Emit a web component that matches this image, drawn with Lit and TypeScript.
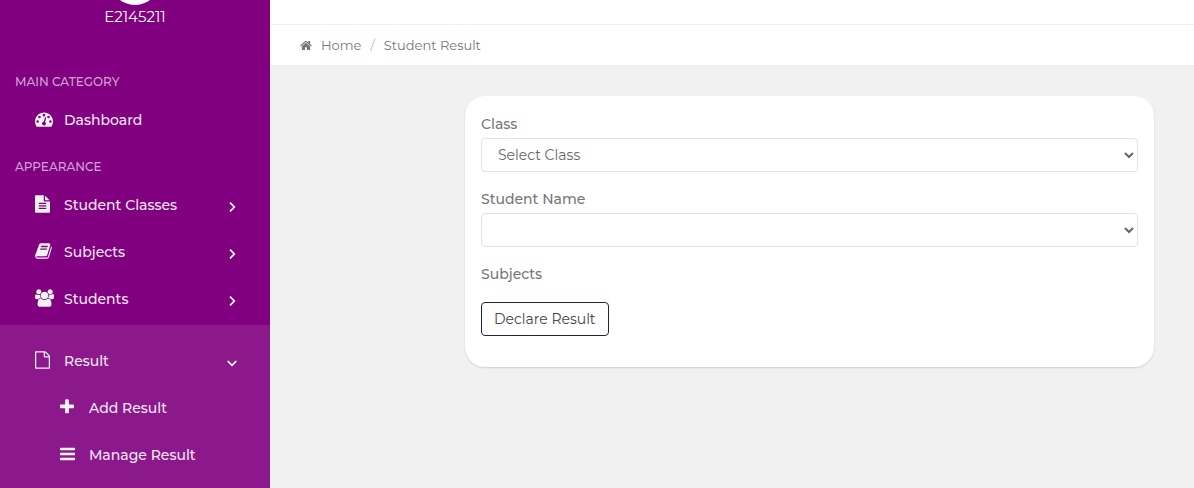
import { LitElement, html, css, svg } from "lit";
import { customElement } from "lit/decorators.js";
import { classMap } from "lit/directives/class-map.js";

interface Glyph {
  box: string;
  width: number;
  d: string;
}

const dot = (x: number, y: number) =>
  `M${x - 128} ${y}a128 128 0 1 0 256 0a128 128 0 1 0-256 0z`;
const line = (y: number) =>
  `M1280 ${y}v-64q0-14-9-23t-23-9h-704q-14 0-23 9t-9 23v64q0 14 9 23t23 9h704q14 0 23-9t9-23z`;
const bar = (y: number) =>
  `M1664 ${y}v128q0 26-19 45t-45 19h-1408q-26 0-45-19t-19-45v-128q0-26 19-45t45-19h1408q26 0 45 19t19 45z`;

const glyphs: Record<string, Glyph> = {
  dashboard: {
    box: "0 0 1792 1792",
    width: 18,
    d:
      "M1792 1152q0 261-141 483-19 29-54 29h-1402q-35 0-54-29-141-221-141-483 0-182 71-348t191-286 286-191 348-71 348 71 286 191 191 286 71 348z" +
      "M1004 1185l101-382q6-26-7.500-48.500t-38.500-29.500-48 6.500-30 39.500l-101 382q-60 5-107 43.500t-63 98.500q-20 77 20 146t117 89 146-20 89-117q16-60-6-117t-72-91z" +
      dot(256, 1152) + dot(448, 704) + dot(896, 512) + dot(1344, 704) + dot(1536, 1152),
  },
  fileText: {
    box: "128 0 1536 1792",
    width: 15,
    d:
      "M1596 476q14 14 28 36h-472v-472q22 14 36 28zM1120 640h544v1056q0 40-28 68t-68 28h-1344q-40 0-68-28t-28-68v-1600q0-40 28-68t68-28h800v544q0 40 28 68t68 28z" +
      line(1376) + line(1120) + line(864),
  },
  file: {
    box: "128 0 1536 1792",
    width: 15,
    d: "M1596 380q28 28 48 76t20 88v1152q0 40-28 68t-68 28h-1344q-40 0-68-28t-28-68v-1600q0-40 28-68t68-28h896q40 0 88 20t76 48zM1152 136v376h376q-10-29-22-41l-313-313q-12-12-41-22zM1536 1664v-1024h-416q-40 0-68-28t-28-68v-416h-768v1536h1280z",
  },
  book: {
    box: "64 0 1664 1792",
    width: 17,
    d: "M1703 478q40 57 18 129l-275 906q-19 64-76.500 107.500t-122.500 43.500h-923q-77 0-148.500-53.500t-99.500-131.500q-24-67-2-127 0-4 3-27t4-37q1-8-3-21.500t-3-19.500q2-11 8-21t16.500-23.500 16.500-23.500q23-38 45-91.500t30-91.500q3-10 .5-30t-.5-28q3-11 17-28t17-23q21-36 42-92t25-90q1-9-2.500-32t.5-28q4-13 22-30.500t22-22.500q19-26 42.500-84.500t27.500-96.500q1-8-3-25.500t-2-26.500q2-8 9-18t18-23 17-21q8-12 16.500-30.500t15-35 16-36 19.500-32 26.500-23.500 36-11.500 47.500 5.500l-1 3q38-9 51-9h761q74 0 114 56t18 130l-274 906q-36 119-71.500 153.500t-128.500 34.500h-869q-27 0-38 15-11 16-1 43 24 70 144 70h923q29 0 56-15.500t35-41.500l300-987q7-22 5-57 38 15 59 43zM639 480q-4 13 2 22.500t20 9.500h608q13 0 25.500-9.500t16.500-22.500l21-64q4-13-2-22.500t-20-9.500h-608q-13 0-25.500 9.500t-16.500 22.500zM556 736q-4 13 2 22.500t20 9.500h608q13 0 25.500-9.500t16.500-22.500l21-64q4-13-2-22.500t-20-9.500h-608q-13 0-25.500 9.500t-16.500 22.500z",
  },
  group: {
    box: "0 0 1920 1792",
    width: 19,
    d: "M593 896q-162 5-265 128h-134q-82 0-138-40.500t-56-118.500q0-353 124-353 6 0 43.500 21t97.500 42.500 119 21.500q67 0 133-23-5 37-5 66 0 159 92 294zM1664 1533q0 120-73 189.500t-194 69.500h-874q-121 0-194-69.500t-73-189.500q0-53 3.500-103.500t14-109 26.500-108.500 43-97.500 62-81 85.500-53.500 111.500-20q10 0 43 21.500t73 48 107 48 135 21.500 135-21.500 107-48 73-48 43-21.500q61 0 111.500 20t85.500 53.500 62 81 43 97.500 26.500 108.500 14 109 3.500 103.500zM640 256q0 106-75 181t-181 75-181-75-75-181 75-181 181-75 181 75 75 181zM1344 640q0 159-112.500 271.500t-271.500 112.500-271.500-112.500-112.500-271.500 112.500-271.500 271.500-112.500 271.500 112.500 112.500 271.500zM1920 865q0 78-56 118.500t-138 40.500h-134q-103-123-265-128 92-135 92-294 0-29-5-66 66 23 133 23 59 0 119-21.500t97.500-42.500 43.500-21q124 0 124 353zM1792 256q0 106-75 181t-181 75-181-75-75-181 75-181 181-75 181 75 75 181z",
  },
  plus: {
    box: "192 0 1408 1792",
    width: 14,
    d: "M1600 736v192q0 40-28 68t-68 28h-416v416q0 40-28 68t-68 28h-192q-40 0-68-28t-28-68v-416h-416q-40 0-68-28t-28-68v-192q0-40 28-68t68-28h416v-416q0-40 28-68t68-28h192q40 0 68 28t28 68v416h416q40 0 68 28t28 68z",
  },
  bars: {
    box: "128 0 1536 1792",
    width: 15,
    d: bar(1344) + bar(832) + bar(320),
  },
  home: {
    box: "64 128 1664 1536",
    width: 12,
    d: "M1472 992v480q0 26-19 45t-45 19h-384v-384h-256v384h-384q-26 0-45-19t-19-45v-480q0-1 .5-3t.5-3l575-474 575 474q1 2 1 6zM1695 923l-62 74q-8 9-21 11h-3q-13 0-21-7l-692-577-692 577q-12 8-24 7-13-2-21-11l-62-74q-8-10-7-23.500t11-21.500l719-599q32-26 76-26t76 26l244 204v-195q0-14 9-23t23-9h192q14 0 23 9t9 23v408l219 182q10 8 11 21.500t-7 23.500z",
  },
};

const glyph = (name: string, height = 18) => {
  const g = glyphs[name];
  return html`<svg class="glyph" viewBox=${g.box} width=${g.width} height=${height} aria-hidden="true">
    ${svg`<path fill="currentColor" fill-rule="evenodd" d=${g.d}></path>`}
  </svg>`;
};

@customElement("side-nav")
export class SideNav extends LitElement {
  static styles = css`
    :host {
      display: block;
      background: #800080;
      color: #f3e6f3;
      font-size: 14px;
    }
    .profile {
      display: flex;
      flex-direction: column;
      align-items: center;
      height: 72px;
      color: #fff;
      font-size: 15px;
      line-height: 20px;
    }
    .avatar {
      flex: none;
      width: 50px;
      height: 50px;
      margin-top: -45px;
      margin-bottom: 2px;
      border-radius: 50%;
      background: #fff;
    }
    .heading {
      margin: 0;
      padding-left: 15px;
      color: #d2a0d2;
      font-size: 12px;
      font-weight: 500;
      line-height: 20px;
      text-transform: uppercase;
    }
    .list {
      list-style: none;
      margin: 0;
      padding: 4px 0 14px;
    }
    .list.open {
      padding: 12px 0 10px;
      background: #8c198c;
    }
    .list.closed {
      padding-bottom: 3px;
    }
    .link {
      display: flex;
      align-items: center;
      height: 47px;
      box-sizing: border-box;
      padding: 0 32px 0 35px;
      color: inherit;
      font-weight: 500;
      text-decoration: none;
    }
    .link.child {
      padding-left: 60px;
    }
    .icon {
      display: flex;
      width: 29px;
      padding-bottom: 2px;
      color: #f2f2f2;
    }
    .glyph {
      display: block;
    }
    .arrow {
      margin-left: auto;
      padding-top: 4px;
    }
    .arrow svg {
      display: block;
    }
    .arrow.down svg {
      transform: rotate(90deg);
    }
  `;

  private row(icon: string, label: string, arrow = "", child = false) {
    return html`<li>
      <a class=${classMap({ link: true, child })} href="#">
        <span class="icon">${glyph(icon)}</span>
        <span>${label}</span>
        ${arrow
          ? html`<span class=${classMap({ arrow: true, down: arrow === "down" })}>
              <svg width="12" height="12" viewBox="0 0 12 12" aria-hidden="true">
                <path d="M4 1.700l4.300 4.300-4.300 4.300" fill="none" stroke="#fff" stroke-width="1.700"></path>
              </svg>
            </span>`
          : ""}
      </a>
    </li>`;
  }

  render() {
    return html`
      <div class="profile"><div class="avatar"></div><span>E2145211</span></div>
      <nav>
        <h2 class="heading">Main Category</h2>
        <ul class="list">
          ${this.row("dashboard", "Dashboard")}
        </ul>
        <h2 class="heading">Appearance</h2>
        <ul class="list closed">
          ${this.row("fileText", "Student Classes", "right")}
          ${this.row("book", "Subjects", "right")}
          ${this.row("group", "Students", "right")}
        </ul>
        <ul class="list open">
          ${this.row("file", "Result", "down")}
          ${this.row("plus", "Add Result", "", true)}
          ${this.row("bars", "Manage Result", "", true)}
        </ul>
      </nav>
    `;
  }
}

@customElement("result-form")
export class ResultForm extends LitElement {
  static styles = css`
    :host {
      display: block;
    }
    .card {
      padding: 18px 16px 31px;
      border-radius: 20px;
      background: #fff;
      box-shadow: 0 1px 2px rgba(0, 0, 0, 0.14);
    }
    .field {
      display: flex;
      flex-direction: column;
      gap: 4px;
      margin-bottom: 17px;
    }
    .field:last-of-type {
      margin-bottom: 18px;
    }
    .label {
      color: #777;
      font-size: 14px;
      font-weight: 500;
      line-height: 20px;
    }
    .select {
      width: 100%;
      height: 34px;
      padding: 0 12px;
      border: 1px solid #e3e3e3;
      border-radius: 4px;
      background: #fff;
      color: #666;
      font: inherit;
      font-size: 14px;
    }
    .button {
      height: 34px;
      padding: 0 12px;
      border: 1px solid #1b2547;
      border-radius: 4px;
      background: #fff;
      color: #44444c;
      font: inherit;
      font-size: 14px;
    }
  `;

  render() {
    return html`<form class="card">
      <div class="field">
        <label class="label" for="class">Class</label>
        <select class="select" id="class"><option>Select Class</option></select>
      </div>
      <div class="field">
        <label class="label" for="student">Student Name</label>
        <select class="select" id="student"><option></option></select>
      </div>
      <div class="field"><span class="label">Subjects</span></div>
      <button class="button" type="button">Declare Result</button>
    </form>`;
  }
}

@customElement("app-root")
export class AppRoot extends LitElement {
  static styles = css`
    :host {
      display: grid;
      grid-template-columns: 270px 1fr;
      min-height: 100vh;
      background: #f1f1f1;
      font-family: "Montserrat", "Inter", sans-serif;
    }
    .topbar {
      height: 24px;
      border-bottom: 1px solid #f1f1f1;
      background: #fff;
    }
    .crumbs {
      display: flex;
      align-items: center;
      gap: 9px;
      height: 40px;
      padding: 0 30px;
      background: #fff;
      color: #777;
      font-size: 13px;
    }
    .crumb {
      display: flex;
      align-items: center;
      gap: 9px;
      color: inherit;
      text-decoration: none;
    }
    .slash {
      color: #bbb;
    }
    .content {
      padding: 31px 40px 31px 195px;
    }
  `;

  render() {
    return html`
      <side-nav></side-nav>
      <main>
        <div class="topbar"></div>
        <nav class="crumbs" aria-label="Breadcrumb">
          <a class="crumb" href="#">${glyph("home", 11)}<span>Home</span></a>
          <span class="slash">/</span>
          <span>Student Result</span>
        </nav>
        <div class="content"><result-form></result-form></div>
      </main>
    `;
  }
}
